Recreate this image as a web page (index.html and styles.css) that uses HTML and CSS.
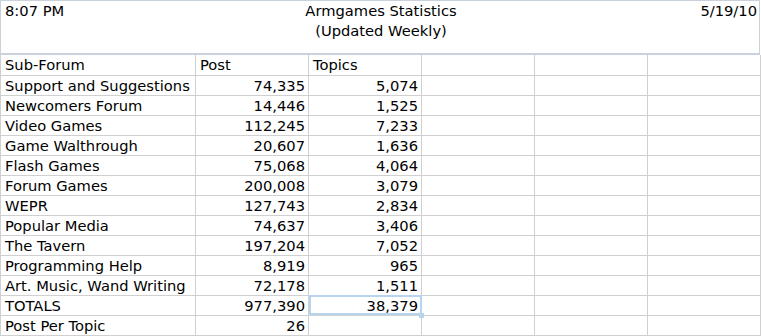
FILE: index.html
```html
<!DOCTYPE html>
<html>
<head>
<meta charset="utf-8">
<link rel="stylesheet" href="styles.css">
</head>
<body>
<div class="sheet">
  <div class="page-header">
    <div class="hdr-left">8:07 PM</div>
    <div class="hdr-center">Armgames Statistics<br>(Updated Weekly)</div>
    <div class="hdr-right">5/19/10</div>
  </div>
  <table class="grid">
    <colgroup>
      <col class="c-name"><col class="c-num"><col class="c-num"><col class="c-num"><col class="c-num"><col class="c-num">
    </colgroup>
    <tr><td>Sub-Forum</td><td>Post</td><td>Topics</td><td></td><td></td><td></td></tr>
    <tr><td>Support and Suggestions</td><td class="n">74,335</td><td class="n">5,074</td><td></td><td></td><td></td></tr>
    <tr><td>Newcomers Forum</td><td class="n">14,446</td><td class="n">1,525</td><td></td><td></td><td></td></tr>
    <tr><td>Video Games</td><td class="n">112,245</td><td class="n">7,233</td><td></td><td></td><td></td></tr>
    <tr><td>Game Walthrough</td><td class="n">20,607</td><td class="n">1,636</td><td></td><td></td><td></td></tr>
    <tr><td>Flash Games</td><td class="n">75,068</td><td class="n">4,064</td><td></td><td></td><td></td></tr>
    <tr><td>Forum Games</td><td class="n">200,008</td><td class="n">3,079</td><td></td><td></td><td></td></tr>
    <tr><td>WEPR</td><td class="n">127,743</td><td class="n">2,834</td><td></td><td></td><td></td></tr>
    <tr><td>Popular Media</td><td class="n">74,637</td><td class="n">3,406</td><td></td><td></td><td></td></tr>
    <tr><td>The Tavern</td><td class="n">197,204</td><td class="n">7,052</td><td></td><td></td><td></td></tr>
    <tr><td>Programming Help</td><td class="n">8,919</td><td class="n">965</td><td></td><td></td><td></td></tr>
    <tr><td>Art. Music, Wand Writing</td><td class="n">72,178</td><td class="n">1,511</td><td></td><td></td><td></td></tr>
    <tr><td>TOTALS</td><td class="n">977,390</td><td class="n selected">38,379<span class="handle"></span></td><td></td><td></td><td></td></tr>
    <tr><td>Post Per Topic</td><td class="n">26</td><td></td><td></td><td></td><td></td></tr>
  </table>
</div>
</body>
</html>
```

FILE: styles.css
```css
html, body {
  margin: 0;
  padding: 0;
  background: #ffffff;
}
body {
  font-family: "DejaVu Sans", Verdana, sans-serif;
  font-size: 14.7px;
  color: #000;
}
.sheet {
  width: 760px;
}
.page-header {
  display: flex;
  justify-content: space-between;
  height: 52px;
  border: 1px solid #c9d1dc;
  border-bottom: 2px solid #c9d1dc;
  padding: 0 2px 0 4px;
  line-height: 20px;
  box-sizing: content-box;
  width: 752px;
}
.hdr-left, .hdr-right {
  width: 120px;
}
.hdr-right { text-align: right; }
.hdr-center {
  text-align: center;
  flex: 1;
}
.grid {
  border-collapse: collapse;
  table-layout: fixed;
  width: 760px;
}
.c-name { width: 195px; }
.c-num { width: 113px; }
.grid td {
  padding: 0 3px 0 4px;
  border: 1px solid #d0d0d0;
  border-top: none;
  line-height: 19px;
  white-space: nowrap;
  overflow: visible;
  box-sizing: border-box;
}
.grid tr td { height: 20px; }
.grid td.n { text-align: right; }
.grid td.selected {
  position: relative;
  outline: 2px solid #b8d3f0;
  outline-offset: -2px;
}
.handle {
  position: absolute;
  right: -3px;
  bottom: -3px;
  width: 5px;
  height: 5px;
  background: #b8d3f0;
}
```
